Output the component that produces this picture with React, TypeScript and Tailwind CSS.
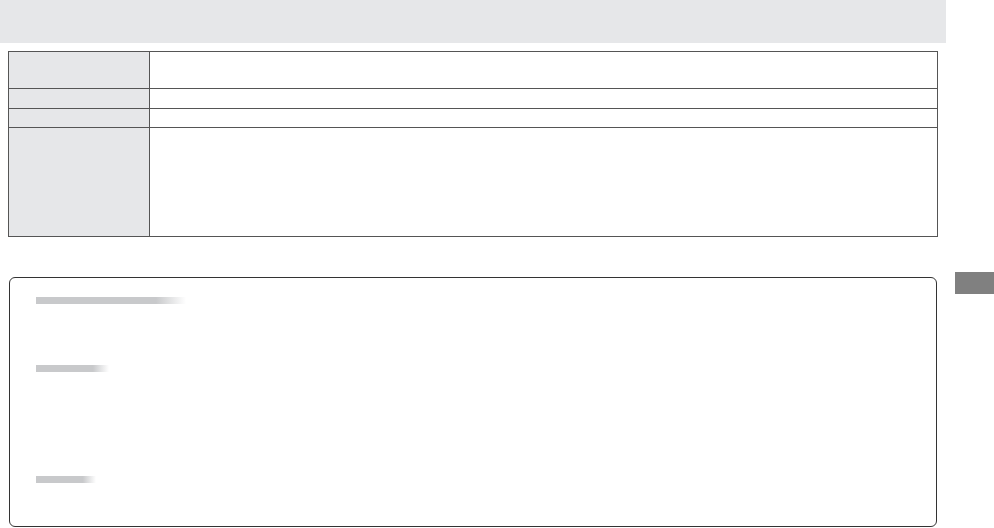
export default function App() {
  return (
    <div className="relative w-[994px] h-[528px] bg-white overflow-hidden" style={{ fontFamily: '"Liberation Sans", Arial, sans-serif' }}>
      <div className="h-[43px] w-[946px] bg-[#e6e7e9]" />
      <div className="ml-[8px] mt-[8px] w-[930px] border border-[#555] grid grid-cols-[141px_1fr]">
        <div className="h-[36px] bg-[#e6e7e9] border-r border-[#555]" />
        <div className="h-[36px]" />
        <div className="h-[20px] bg-[#e6e7e9] border-r border-t border-[#555]" />
        <div className="h-[20px] border-t border-[#555]" />
        <div className="h-[19px] bg-[#e6e7e9] border-r border-t border-[#555]" />
        <div className="h-[19px] border-t border-[#555]" />
        <div className="h-[109px] bg-[#e6e7e9] border-r border-t border-[#555]" />
        <div className="h-[109px] border-t border-[#555]" />
      </div>
      <div className="ml-[9px] mt-[40px] w-[928px] h-[250px] rounded-[6px] border border-[#333] pt-[19px] pl-[26px] flex flex-col">
        <div className="w-[150px] h-[7px] bg-[linear-gradient(to_right,#c8c9cb_80%,#ffffff)]" />
        <div className="mt-[61px] w-[73px] h-[7px] bg-[linear-gradient(to_right,#c8c9cb_78%,#ffffff)]" />
        <div className="mt-[104px] w-[60px] h-[7px] bg-[linear-gradient(to_right,#c8c9cb_78%,#ffffff)]" />
      </div>
      <div className="absolute left-[955px] top-[272px] w-[39px] h-[22px] bg-[#808080]" />
    </div>
  );
}
